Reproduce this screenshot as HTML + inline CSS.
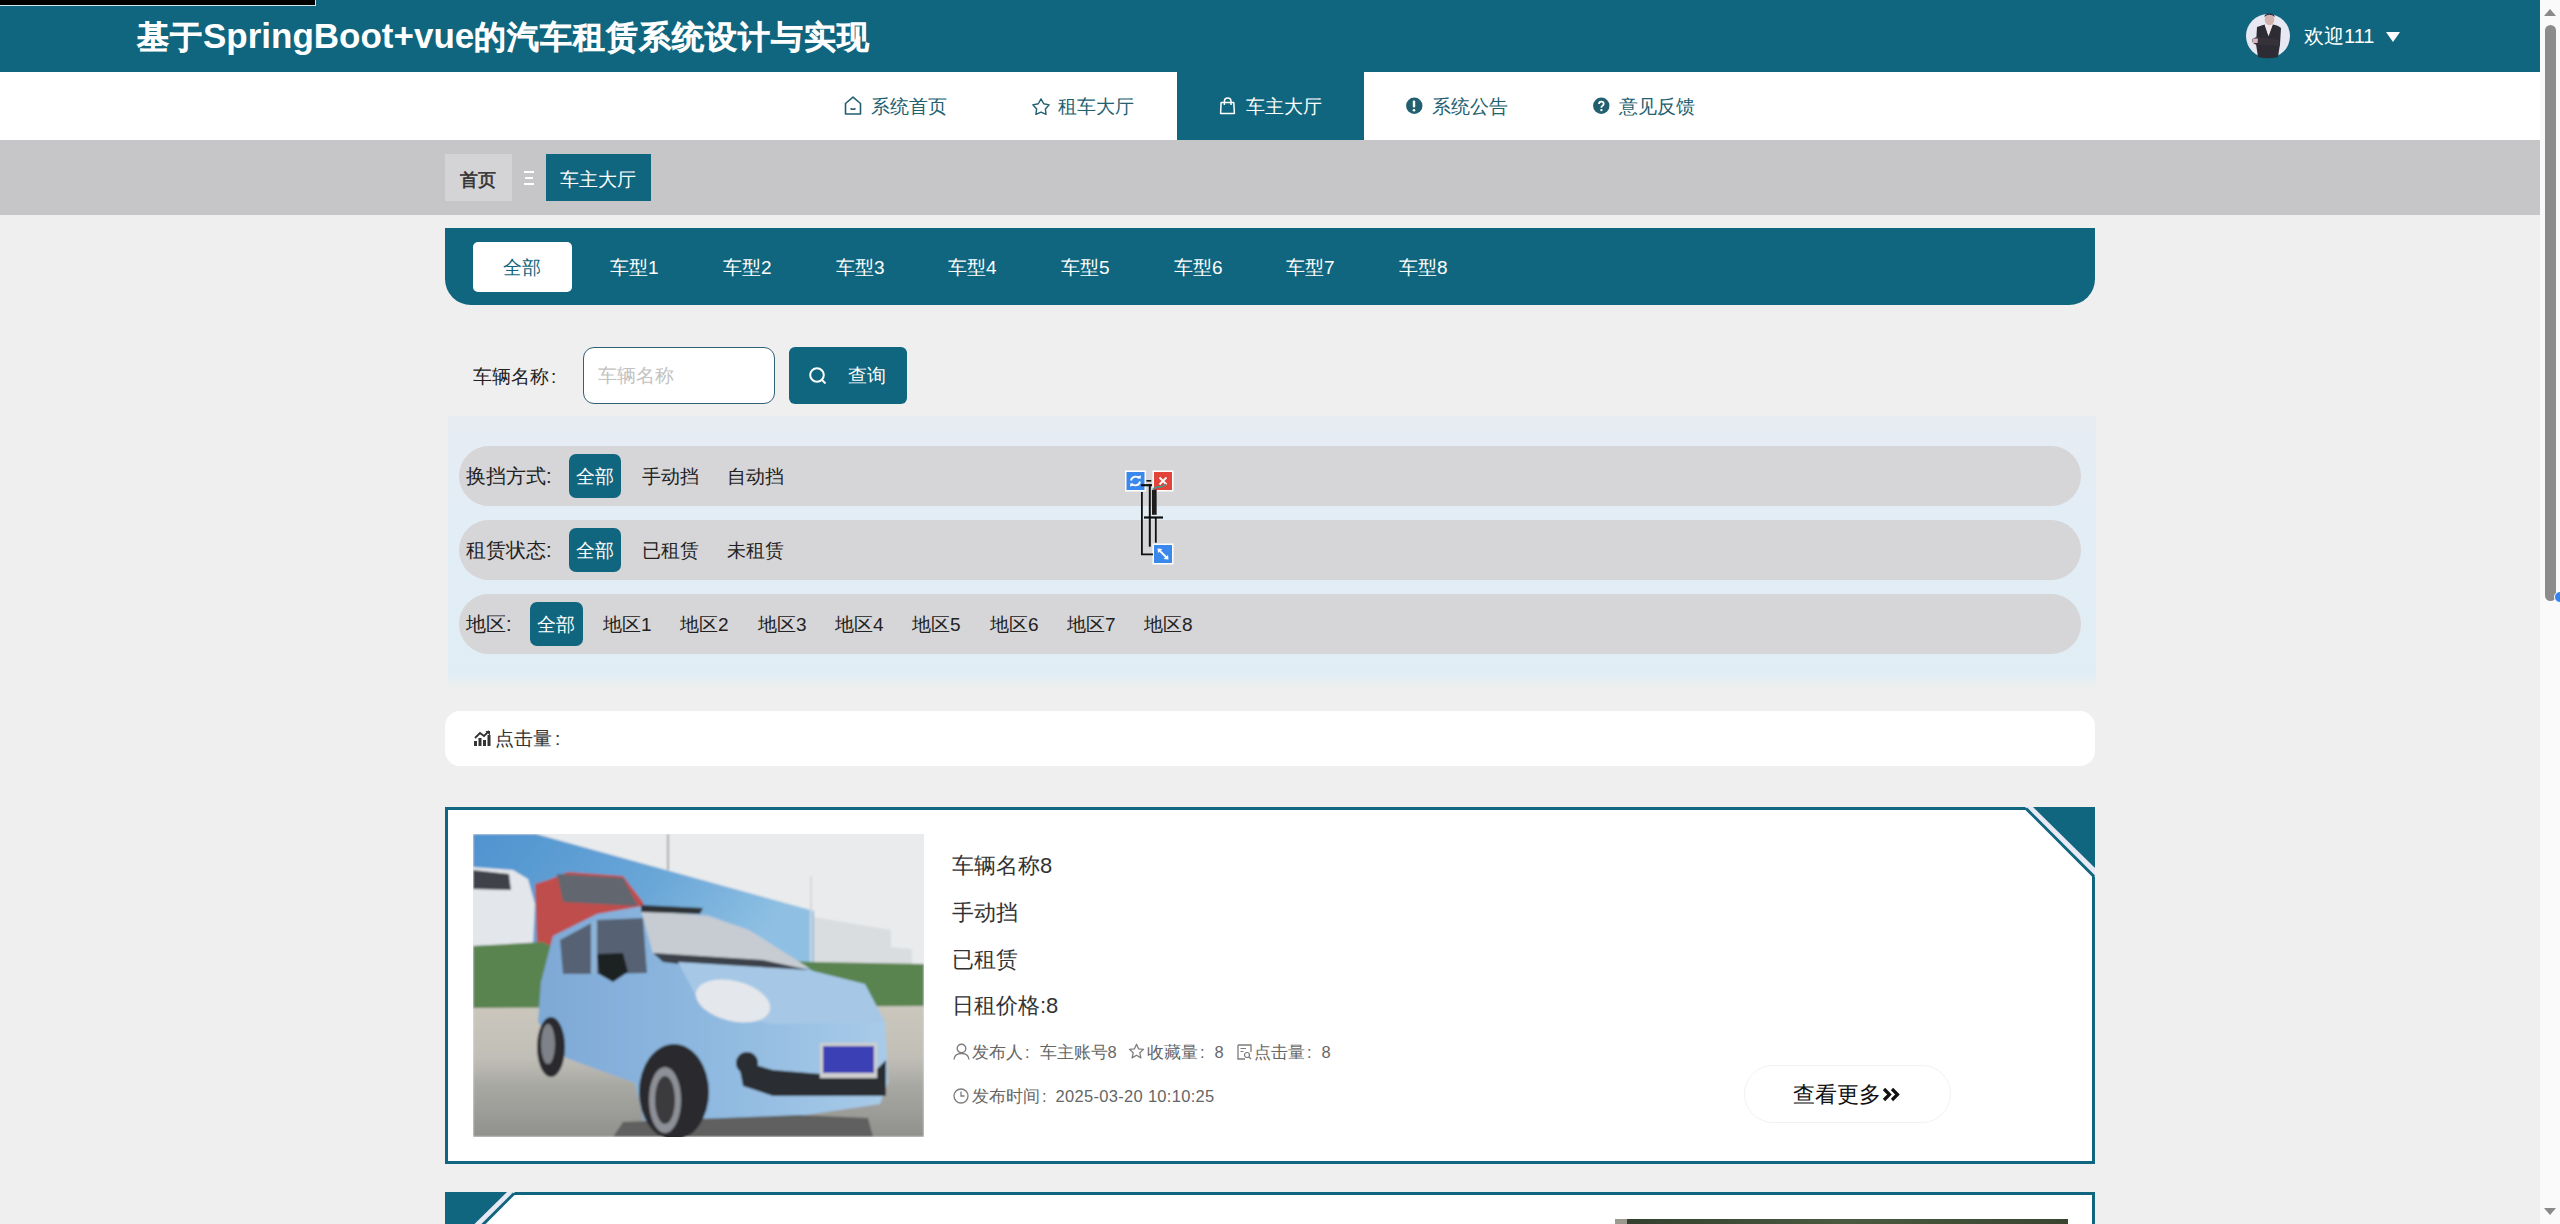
<!DOCTYPE html>
<html><head><meta charset="utf-8">
<style>
*{box-sizing:border-box;margin:0;padding:0}
html,body{width:2560px;height:1224px;overflow:hidden;background:#efefef;font-family:"Liberation Sans",sans-serif;position:relative}
.a{position:absolute}
.t{position:absolute;white-space:nowrap;line-height:1}
svg{position:absolute;overflow:visible}
</style></head><body>
<div class="a" style="left:0px;top:0px;width:2540px;height:72px;background:#10667e;"></div>
<div class="a" style="left:0px;top:0px;width:316px;height:6px;background:#000;border-right:1px solid #cfe6ea;border-bottom:1px solid #cfe6ea"></div>
<div class="t" id="title" style="left:137px;top:18px;font-size:32px;color:#fff;-webkit-text-stroke:1.6px #fff;letter-spacing:1px">基于<b style='-webkit-text-stroke:0;font-size:35px;letter-spacing:0'>SpringBoot+vue</b>的汽车租赁系统设计与实现</div>
<svg style="left:2246px;top:14px" width="44" height="44" viewBox="0 0 44 44"><circle cx="22" cy="22" r="22" fill="#e8e8f2"/>
<path d="M11 13 Q16 11 19 10.5 L22.5 22 L26.5 10.5 Q32 11 35 14 L34 30 L32 43 Q22 45.5 12 43 L10 30 Z" fill="#2d2b33"/>
<path d="M18.5 10.5 L26.8 10.5 L22.5 22 Z" fill="#efe6ea"/>
<path d="M6.5 25 Q9 22.5 14 23 L33 26 L34 32 L13 31 Q8 31 6.5 28 Z" fill="#35323a"/>
<path d="M7 24.5 L12 24.5 L11.5 29 L7 29Z" fill="#d9b3bd"/>
<ellipse cx="23.5" cy="5.5" rx="4.8" ry="5.8" fill="#d2b2ad"/>
<path d="M18.3 3 Q23.5 -1.5 28.8 3 L28 1 Q23.5 -2.5 19 1Z" fill="#2a2c44"/>
</svg>
<div class="t" id="welcome" style="left:2304px;top:26px;font-size:20px;color:#fff;">欢迎111</div>
<div class="a" style="left:2386px;top:32px;width:0;height:0;border-left:7px solid transparent;border-right:7px solid transparent;border-top:10px solid #fff"></div>
<div class="a" style="left:0px;top:72px;width:2540px;height:68px;background:#fff;"></div>
<div class="a" style="left:1177px;top:72px;width:187px;height:68px;background:#10667e;"></div>
<div class="t" id="nav0" style="left:871px;top:97px;font-size:19px;color:#22606f;">系统首页</div>
<svg style="left:844px;top:96px" width="18" height="20" viewBox="0 0 18 20"><path d="M1.5 7.5 L9 1.2 L16.5 7.5 L16.5 18 L1.5 18 Z" fill="none" stroke="#22606f" stroke-width="1.6" stroke-linejoin="round"/><path d="M6.5 12.5 Q9 14 11.5 12.5" stroke="#22606f" stroke-width="1.5" fill="none"/></svg>
<div class="t" id="nav1" style="left:1058px;top:97px;font-size:19px;color:#22606f;">租车大厅</div>
<svg style="left:1031px;top:96.5px" width="20" height="20" viewBox="0 0 20 20"><path d="M10.00,1.90 L12.70,6.78 L18.18,7.84 L14.37,11.92 L15.05,17.46 L10.00,15.10 L4.95,17.46 L5.63,11.92 L1.82,7.84 L7.30,6.78Z" fill="none" stroke="#22606f" stroke-width="1.4" stroke-linejoin="round"/></svg>
<div class="t" id="nav2" style="left:1246px;top:97px;font-size:19px;color:#fff;">车主大厅</div>
<svg style="left:1219px;top:96px" width="18" height="20" viewBox="0 0 18 20"><path d="M2.1 6.6 L14.8 6.6 L15.4 17.4 L1.6 17.4 Z" fill="none" stroke="#fff" stroke-width="1.5" stroke-linejoin="round"/><path d="M5.4 9 L5.4 5.2 A3.3 3.3 0 0 1 12 5.2 L12 9" fill="none" stroke="#fff" stroke-width="1.5"/></svg>
<div class="t" id="nav3" style="left:1432px;top:97px;font-size:19px;color:#22606f;">系统公告</div>
<svg style="left:1405px;top:97px" width="18" height="18" viewBox="0 0 18 18"><circle cx="9.3" cy="8.8" r="8.2" fill="#22606f"/><rect x="7.8" y="3.5" width="2.4" height="7" rx="1" fill="#fff"/><circle cx="9" cy="13.3" r="1.3" fill="#fff"/></svg>
<div class="t" id="nav4" style="left:1619px;top:97px;font-size:19px;color:#22606f;">意见反馈</div>
<svg style="left:1592px;top:97px" width="18" height="18" viewBox="0 0 18 18"><circle cx="9.3" cy="8.8" r="8.2" fill="#22606f"/><path d="M7 7.1 Q7 4.6 9.4 4.6 Q11.7 4.6 11.7 6.8 Q11.7 8.2 10.2 9 Q9.4 9.5 9.4 10.7" fill="none" stroke="#fff" stroke-width="1.8"/><circle cx="9.4" cy="13.1" r="1.2" fill="#fff"/></svg>
<div class="a" style="left:0px;top:140px;width:2540px;height:75px;background:#c6c5c7;"></div>
<div class="a" style="left:445px;top:154px;width:67px;height:47px;background:#d4d4d6;"></div>
<div class="t" id="bc1" style="left:460px;top:170.5px;font-size:18px;color:#333;-webkit-text-stroke:0.6px #333">首页</div>
<div class="a" style="left:524px;top:171px;width:10px;height:2px;background:#fff;"></div>
<div class="a" style="left:525px;top:177px;width:8px;height:2px;background:#fff;"></div>
<div class="a" style="left:524px;top:183px;width:10px;height:2px;background:#fff;"></div>
<div class="a" style="left:546px;top:154px;width:105px;height:47px;background:#10667e;"></div>
<div class="t" id="bc2" style="left:560px;top:170px;font-size:19px;color:#fff;">车主大厅</div>
<div class="a" style="left:445px;top:228px;width:1650px;height:77px;background:#10667e;border-radius:0 0 26px 26px"></div>
<div class="a" style="left:473px;top:242px;width:99px;height:50px;background:#fff;border-radius:5px"></div>
<div class="t" id="tab0" style="left:503px;top:258px;font-size:19px;color:#10667e;">全部</div>
<div class="t" id="tab1" style="left:610px;top:258px;font-size:19px;color:#fff;">车型1</div>
<div class="t" id="tab2" style="left:723px;top:258px;font-size:19px;color:#fff;">车型2</div>
<div class="t" id="tab3" style="left:836px;top:258px;font-size:19px;color:#fff;">车型3</div>
<div class="t" id="tab4" style="left:948px;top:258px;font-size:19px;color:#fff;">车型4</div>
<div class="t" id="tab5" style="left:1061px;top:258px;font-size:19px;color:#fff;">车型5</div>
<div class="t" id="tab6" style="left:1174px;top:258px;font-size:19px;color:#fff;">车型6</div>
<div class="t" id="tab7" style="left:1286px;top:258px;font-size:19px;color:#fff;">车型7</div>
<div class="t" id="tab8" style="left:1399px;top:258px;font-size:19px;color:#fff;">车型8</div>
<div class="t" id="slabel" style="left:473px;top:367px;font-size:19px;color:#222;">车辆名称<span style='margin-left:2px'>:</span></div>
<div class="a" style="left:583px;top:347px;width:192px;height:57px;background:#fff;border:1.5px solid #2f6276;border-radius:11px"></div>
<div class="t" id="sph" style="left:598px;top:366px;font-size:19px;color:#c2c2c2;">车辆名称</div>
<div class="a" style="left:789px;top:347px;width:118px;height:57px;background:#10667e;border-radius:6px"></div>
<svg style="left:809px;top:367px" width="18" height="17" viewBox="0 0 18 17"><circle cx="8" cy="8" r="6.8" fill="none" stroke="#fff" stroke-width="2"/><path d="M13 13 L16.5 16.5" stroke="#fff" stroke-width="2"/></svg>
<div class="t" id="sbtn" style="left:848px;top:366px;font-size:19px;color:#fff;">查询</div>
<div class="a" style="left:448px;top:416px;width:1648px;height:272px;background:linear-gradient(180deg,#e7ecf3 0,#e2edf5 40%,#e1edf5 95%,#e8efef 98%,#edefee 100%);"></div>
<div class="a" style="left:459px;top:446px;width:1622px;height:60px;background:#d6d5d7;border-radius:30px"></div>
<div class="a" style="left:459px;top:520px;width:1622px;height:60px;background:#d6d5d7;border-radius:30px"></div>
<div class="a" style="left:459px;top:594px;width:1622px;height:60px;background:#d6d5d7;border-radius:30px"></div>
<div class="t" id="f1l" style="left:466px;top:466px;font-size:20px;color:#222;">换挡方式:</div>
<div class="a" style="left:569px;top:454px;width:52px;height:44px;background:#10667e;border-radius:7px"></div>
<div class="t" id="f1a" style="left:576px;top:467px;font-size:19px;color:#fff;">全部</div>
<div class="t" id="f1b" style="left:642px;top:467px;font-size:19px;color:#222;">手动挡</div>
<div class="t" style="left:727px;top:467px;font-size:19px;color:#222;">自动挡</div>
<div class="t" id="f2l" style="left:466px;top:540px;font-size:20px;color:#222;">租赁状态:</div>
<div class="a" style="left:569px;top:528px;width:52px;height:44px;background:#10667e;border-radius:7px"></div>
<div class="t" style="left:576px;top:541px;font-size:19px;color:#fff;">全部</div>
<div class="t" style="left:642px;top:541px;font-size:19px;color:#222;">已租赁</div>
<div class="t" style="left:727px;top:541px;font-size:19px;color:#222;">未租赁</div>
<div class="t" id="f3l" style="left:466px;top:614px;font-size:20px;color:#222;">地区:</div>
<div class="a" style="left:530px;top:602px;width:53px;height:44px;background:#10667e;border-radius:7px"></div>
<div class="t" style="left:537px;top:615px;font-size:19px;color:#fff;">全部</div>
<div class="t" id="reg0" style="left:603px;top:615px;font-size:19px;color:#222;">地区1</div>
<div class="t" id="reg1" style="left:680px;top:615px;font-size:19px;color:#222;">地区2</div>
<div class="t" id="reg2" style="left:758px;top:615px;font-size:19px;color:#222;">地区3</div>
<div class="t" id="reg3" style="left:835px;top:615px;font-size:19px;color:#222;">地区4</div>
<div class="t" id="reg4" style="left:912px;top:615px;font-size:19px;color:#222;">地区5</div>
<div class="t" id="reg5" style="left:990px;top:615px;font-size:19px;color:#222;">地区6</div>
<div class="t" id="reg6" style="left:1067px;top:615px;font-size:19px;color:#222;">地区7</div>
<div class="t" id="reg7" style="left:1144px;top:615px;font-size:19px;color:#222;">地区8</div>
<div class="a" style="left:445px;top:711px;width:1650px;height:55px;background:#fff;border-radius:15px"></div>
<svg style="left:474px;top:730px" width="17" height="16" viewBox="0 0 17 16"><rect x="0" y="11" width="3" height="5" fill="#333"/><rect x="4.5" y="8" width="3" height="8" fill="#333"/><rect x="9" y="10" width="3" height="6" fill="#333"/><rect x="13.5" y="5" width="3" height="11" fill="#333"/><path d="M1 8 L6 3 L10 6 L15 1" fill="none" stroke="#333" stroke-width="1.8"/><path d="M11.5 1 L16 1 L16 5.5Z" fill="#333"/></svg>
<div class="t" id="clk" style="left:495px;top:729px;font-size:19px;color:#333;">点击量<span style='margin-left:3px'>:</span></div>
<div class="a" style="left:445px;top:807px;width:1650px;height:357px;background:#fff;border:3px solid #10667e"></div>
<svg style="left:2020px;top:807px" width="80" height="80" viewBox="0 0 80 80"><polygon points="5,0 75,0 75,70" fill="#e8e9f4"/><polygon points="13,0 75,0 75,61" fill="#10667e"/><path d="M6 1.5 L74 69.5" stroke="#10667e" stroke-width="3"/></svg>
<svg style="left:473px;top:834px;overflow:hidden" width="451" height="303" viewBox="0 0 451 303">
<defs>
<linearGradient id="bb" x1="0" y1="0" x2="1" y2="0.3"><stop offset="0" stop-color="#4f93cf"/><stop offset="0.6" stop-color="#6aa7d8"/><stop offset="1" stop-color="#8fc0e3"/></linearGradient>
<linearGradient id="gr" x1="0" y1="0" x2="0" y2="1"><stop offset="0" stop-color="#cbc7bd"/><stop offset="0.4" stop-color="#c0beb6"/><stop offset="0.6" stop-color="#a9a9a4"/><stop offset="1" stop-color="#90918d"/></linearGradient>
<linearGradient id="bd" x1="0" y1="0" x2="1" y2="0"><stop offset="0" stop-color="#7ea9d6"/><stop offset="0.5" stop-color="#8fb9e0"/><stop offset="1" stop-color="#a8cbe8"/></linearGradient>
</defs>
<filter id="bl" x="0" y="0" width="1" height="1"><feGaussianBlur stdDeviation="1.2"/></filter>
<g filter="url(#bl)">
<rect x="-5" y="-5" width="461" height="313" fill="#e9ebec"/>
<polygon points="0,0 63,0 341,77 341,128 0,125" fill="url(#bb)"/>
<rect x="194" y="0" width="2" height="36" fill="#aaa"/>
<polygon points="341,83 418,96 418,113 439,115 439,132 341,132" fill="#dadddf"/>
<rect x="337" y="42" width="2" height="90" fill="#d5d8da"/>
<polygon points="0,33 40,36 55,45 62,70 60,110 0,112" fill="#e3e6ea"/>
<polygon points="0,36 36,40 38,56 0,55" fill="#3f4249"/>
<polygon points="62,50 75,46 95,38 150,42 170,68 174,100 150,112 64,112" fill="#bf4d4b"/>
<polygon points="84,40 150,44 165,72 90,68" fill="#62666e"/>
<polygon points="0,112 70,108 90,118 341,128 451,130 451,176 0,176" fill="#5a8450"/>
<polygon points="0,174 451,172 451,303 0,303" fill="url(#gr)"/>
<polygon points="80,102 124,80 169,72 235,80 276,95 341,138 392,153 412,188 415,249 407,270 326,282 225,300 174,302 162,249 93,224 65,188 68,148" fill="url(#bd)"/>
<polygon points="87,106 124,86 170,84 174,139 130,140 90,140" fill="#566273"/>
<polygon points="118,88 124,86 124,140 118,140" fill="#8cb2d8"/>
<polygon points="168,76 235,82 276,96 336,134 250,133 180,120" fill="#c6ccd2"/>
<polygon points="168,71 230,74 227,80 168,78" fill="#2f3136"/>
<polygon points="180,119 290,126 336,136 270,138 190,128" fill="#3b4048"/>
<polygon points="124,120 150,119 155,138 140,148 126,140" fill="#1f2023"/>
<polygon points="205,128 336,136 392,150 412,188 300,190 230,175" fill="#a6c8e6"/>
<ellipse cx="260" cy="167" rx="38" ry="20" fill="#e4e7eb" transform="rotate(14 260 167)"/>
<polygon points="265,226 300,236 348,240 403,236 413,226 413,262 300,262 270,252" fill="#2b2e33"/>
<circle cx="274" cy="229" r="11" fill="#2b2e33"/>
<rect x="347" y="209" width="57" height="35" fill="#cfcfcf"/>
<rect x="350" y="212" width="51" height="27" fill="#3a40b4"/>
<polygon points="150,288 326,281 395,284 400,303 140,303" fill="#5f605e"/>
<ellipse cx="201" cy="258" rx="35" ry="48" fill="#2a2b2e"/>
<ellipse cx="192" cy="266" rx="16" ry="33" fill="#8d9096"/>
<ellipse cx="192" cy="266" rx="10" ry="24" fill="#3a3b3e"/>
<ellipse cx="78" cy="213" rx="14" ry="30" fill="#2a2b2e"/>
<ellipse cx="75" cy="210" rx="7" ry="20" fill="#7f8288"/>
</g>
</svg>
<div class="t" id="c_name" style="left:952px;top:855px;font-size:22px;color:#333;">车辆名称8</div>
<div class="t" id="c_gear" style="left:952px;top:902px;font-size:22px;color:#333;">手动挡</div>
<div class="t" id="c_stat" style="left:952px;top:949px;font-size:22px;color:#333;">已租赁</div>
<div class="t" id="c_price" style="left:952px;top:995px;font-size:22px;color:#333;">日租价格:8</div>
<svg style="left:953px;top:1043px" width="17" height="17" viewBox="0 0 17 17"><circle cx="8.5" cy="5.5" r="4.3" fill="none" stroke="#7c7c7c" stroke-width="1.4"/><path d="M1 16.5 Q1.5 10.5 8.5 10.5 Q15.5 10.5 16 16.5" fill="none" stroke="#7c7c7c" stroke-width="1.4"/></svg>
<div class="t" id="c_pub" style="left:972px;top:1044px;font-size:16.5px;color:#666;">发布人<span style='margin:0 10px 0 2px'>:</span>车主账号8</div>
<svg style="left:1128px;top:1043px" width="17" height="17" viewBox="0 0 20 20"><path d="M10 1.5 L12.5 7 L18.3 7.5 L13.9 11.5 L15.2 17.5 L10 14.4 L4.8 17.5 L6.1 11.5 L1.7 7.5 L7.5 7 Z" fill="none" stroke="#7c7c7c" stroke-width="1.5" stroke-linejoin="round"/></svg>
<div class="t" id="c_fav" style="left:1147px;top:1044px;font-size:16.5px;color:#666;">收藏量<span style='margin:0 10px 0 2px'>:</span>8</div>
<svg style="left:1237px;top:1044px" width="15" height="16" viewBox="0 0 15 16"><path d="M1 1 L14 1 L14 8 M1 1 L1 15 L8 15" fill="none" stroke="#7c7c7c" stroke-width="1.3"/><path d="M3.5 4.5 L9 4.5 M3.5 7.5 L6.5 7.5" stroke="#7c7c7c" stroke-width="1.2"/><circle cx="10" cy="11" r="2.5" fill="none" stroke="#7c7c7c" stroke-width="1.2"/><path d="M12 13 L14 15" stroke="#7c7c7c" stroke-width="1.2"/></svg>
<div class="t" id="c_clk" style="left:1254px;top:1044px;font-size:16.5px;color:#666;">点击量<span style='margin:0 10px 0 2px'>:</span>8</div>
<svg style="left:953px;top:1088px" width="16" height="16" viewBox="0 0 16 16"><circle cx="8" cy="8" r="7" fill="none" stroke="#7c7c7c" stroke-width="1.3"/><path d="M8 3.5 L8 8 L11.5 8" fill="none" stroke="#7c7c7c" stroke-width="1.3"/></svg>
<div class="t" id="c_time" style="left:972px;top:1088px;font-size:16.5px;color:#666;">发布时间<span style='margin:0 9px 0 2px'>:</span><span style='letter-spacing:0.3px'>2025-03-20 10:10:25</span></div>
<div class="a" style="left:1744px;top:1065px;width:207px;height:58px;background:#fff;border:1px solid #f2f2f2;border-radius:29px"></div>
<div class="t" id="c_more" style="left:1793px;top:1084px;font-size:22px;color:#111;">查看更多</div>
<svg style="left:1882px;top:1087px" width="19" height="15" viewBox="0 0 19 15"><path d="M2 2 L7.5 7.5 L2 13 M10 2 L15.5 7.5 L10 13" fill="none" stroke="#111" stroke-width="3.2"/></svg>
<div class="a" style="left:445px;top:1192px;width:1650px;height:60px;background:#fff;border:3px solid #10667e"></div>
<svg style="left:445px;top:1192px" width="80" height="40" viewBox="0 0 80 40"><polygon points="70,0 0,0 0,70" fill="#e8e9f4"/><polygon points="62,0 0,0 0,61" fill="#10667e"/><path d="M69 1.5 L1 69.5" stroke="#10667e" stroke-width="3"/></svg>
<div class="a" style="left:1615px;top:1219px;width:453px;height:10px;background:linear-gradient(90deg,#9a9a90 0,#9a9a90 12px,#33402e 12px,#4a5a40 50%,#3a4530 100%);"></div>
<div class="a" style="left:2540px;top:0px;width:20px;height:1224px;background:#fafafa;"></div>
<div class="a" style="left:2544px;top:9px;width:0;height:0;border-left:6.5px solid transparent;border-right:6.5px solid transparent;border-bottom:7px solid #8a8a8a"></div>
<div class="a" style="left:2545px;top:25px;width:11px;height:576px;background:#8c8c8c;border-radius:6px"></div>
<div class="a" style="left:2544px;top:1208px;width:0;height:0;border-left:6.5px solid transparent;border-right:6.5px solid transparent;border-top:7px solid #8a8a8a"></div>
<svg style="left:1125px;top:470px" width="50" height="96" viewBox="0 0 50 96">
<rect x="0" y="0.5" width="21" height="21" fill="#fff"/><rect x="1.5" y="2" width="18" height="18" fill="#3a88ec"/>
<path d="M6 10.5 A4.6 4.6 0 0 1 14.3 8.6 M15 11.5 A4.6 4.6 0 0 1 6.7 13.4" fill="none" stroke="#fff" stroke-width="1.8"/>
<path d="M12.5 6.5 L15.5 9 L16 5.5Z M8.5 15.5 L5.5 13 L5 16.5Z" fill="#fff"/>
<rect x="27.5" y="0.5" width="21" height="21" fill="#fff"/><rect x="29" y="2" width="18" height="18" fill="#e2443a"/>
<path d="M34.5 7.5 L41.5 14.5 M41.5 7.5 L34.5 14.5" stroke="#fff" stroke-width="1.8"/>
<rect x="27.5" y="73.5" width="21" height="21" fill="#fff"/><rect x="29" y="75" width="18" height="18" fill="#3a88ec"/>
<path d="M33.5 79.5 L42.5 88.5" stroke="#fff" stroke-width="1.8"/>
<path d="M32.5 78.5 L37.5 79 L33 83Z M43.5 89.5 L38.5 89 L43 85Z" fill="#fff"/>
<path d="M21.4 10.8 L26.3 10.8" stroke="#111" stroke-width="1.6"/>
<path d="M16 15.2 L27 15.2" stroke="#111" stroke-width="2.2"/>
<path d="M24.8 14 L24.8 76.7" stroke="#111" stroke-width="2"/>
<path d="M16.9 22 L16.9 84.3 L28 84.3" fill="none" stroke="#111" stroke-width="1.8"/>
<path d="M29.3 19.7 L29.3 44.8" stroke="#1c1c1c" stroke-width="4.7"/>
<path d="M30.8 47.5 L30.8 72.7" stroke="#111" stroke-width="1.8"/>
<path d="M19 47.5 L38 47.5" stroke="#111" stroke-width="2.2"/>
<path d="M28 19 Q32 16 36 17 Q39 16 41 14" fill="none" stroke="#3c9a90" stroke-width="1.6"/>
</svg>
<div class="a" style="left:2554px;top:591px;width:12px;height:12px;border-radius:50%;background:#3583ee;border:1.5px solid #fff"></div>
</body></html>
